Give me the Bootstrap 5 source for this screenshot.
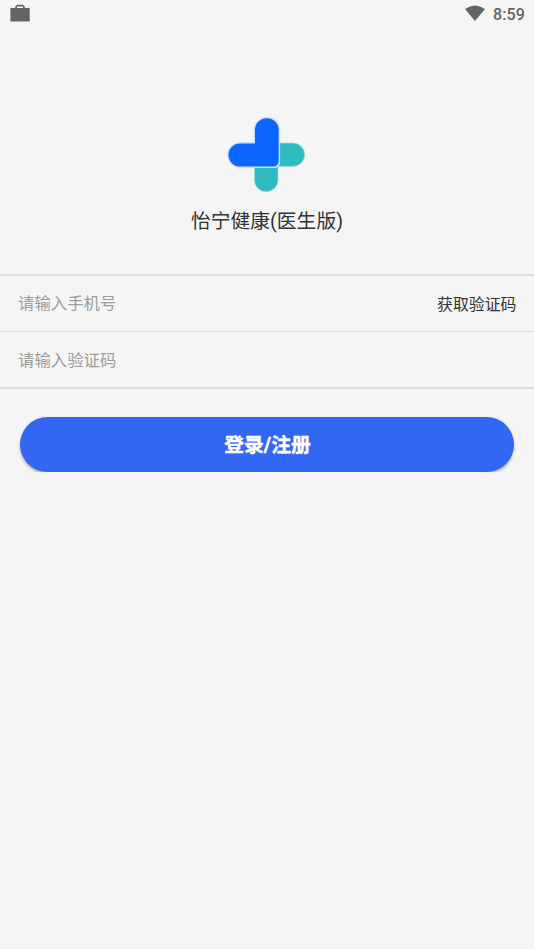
<!DOCTYPE html>
<html lang="zh-CN">
<head>
<meta charset="utf-8">
<meta name="viewport" content="width=device-width, initial-scale=1">
<title>怡宁健康(医生版)</title>
<link href="https://cdn.jsdelivr.net/npm/bootstrap@5.3.0/dist/css/bootstrap.min.css" rel="stylesheet">
<style>
body{background:#f5f5f5;color:#333;font-family:Roboto,"Noto Sans CJK SC",sans-serif;overflow:hidden}
.status-bar{height:28px;padding:0 9px 0 10px;color:#646464}
.clock{font-size:16px;font-weight:500;line-height:30px;letter-spacing:.1px}
.brand{height:246px;padding-top:88px}
.logo{margin-right:1.5px}
.app-title{font-size:19.8px;line-height:30px;margin-top:13px}
.fields{border-top:2px solid #dedede;border-bottom:2px solid #dedede}
.field-row{height:55px;padding:1px 17.5px 0 18px}
.field-row + .field-row{border-top:1px solid #d9d9d9;height:56px;padding-top:2px}
.field-row .form-control{font-size:16.4px;line-height:24px;height:24px;color:#333}
.field-row .form-control::placeholder{color:#9c9c9c;opacity:1}
.code-btn{font-size:15.9px;line-height:24px;color:#333;padding:1px 0 0}
.login-btn{height:55.5px;margin:27.5px 20px 0;padding:1px 0 0 1px;background:#3367f3;color:#fff;font-size:19.8px;font-weight:700;line-height:55px;box-shadow:0 2px 3px rgba(0,0,0,.28);-webkit-text-stroke:.4px #fff}
</style>
<script src="https://cdn.jsdelivr.net/npm/bootstrap@5.3.0/dist/js/bootstrap.bundle.min.js"></script>
</head>
<body>
<header class="status-bar d-flex justify-content-between">
  <svg class="mt-1" width="20" height="18" viewBox="0 0 20 18" aria-hidden="true"><path d="M5.2 4V2.500L7 .8h6l1.800 1.700V4h4.900v13.600H.4V4zM7 4h6V2.500H7z" fill="#646464" fill-rule="evenodd"/></svg>
  <div class="d-flex">
    <svg class="me-2" width="20" height="28" viewBox="0 0 20 28" aria-hidden="true"><path d="M0 9Q10 1.800 20 9L10 21z" fill="#646464"/></svg>
    <span class="clock">8:59</span>
  </div>
</header>
<main>
  <section class="brand d-flex flex-column align-items-center">
    <svg class="logo flex-shrink-0" width="80" height="78" viewBox="226 116 80 78" aria-hidden="true">
      <path d="M279.500 143H293a11.700 11.700 0 0 1 0 23.400H278V180a11.700 11.700 0 0 1-23.600 0V167.500H276Q279.500 166.500 279.500 163z" fill="#2fbbbf" stroke="#a9e0e1" stroke-width=".7"/>
      <path d="M255 143.500V130a11.850 11.850 0 0 1 23.700 0V160.500Q278.700 166.500 272.700 166.500H240a11.500 11.500 0 0 1 0-23z" fill="#0b66ff" stroke="#c4e3fb" stroke-width="2.800" paint-order="stroke"/>
    </svg>
    <h1 class="app-title mb-0 fw-normal">怡宁健康(医生版)</h1>
  </section>
  <form>
    <div class="fields">
      <div class="field-row d-flex align-items-center">
        <input type="tel" class="form-control border-0 rounded-0 bg-transparent shadow-none p-0" placeholder="请输入手机号">
        <button type="button" class="code-btn btn border-0 text-nowrap flex-shrink-0">获取验证码</button>
      </div>
      <div class="field-row d-flex align-items-center">
        <input type="text" class="form-control border-0 rounded-0 bg-transparent shadow-none p-0" placeholder="请输入验证码">
      </div>
    </div>
    <div class="d-grid"><button type="button" class="login-btn btn rounded-pill border-0">登录/注册</button></div>
  </form>
</main>
</body>
</html>
